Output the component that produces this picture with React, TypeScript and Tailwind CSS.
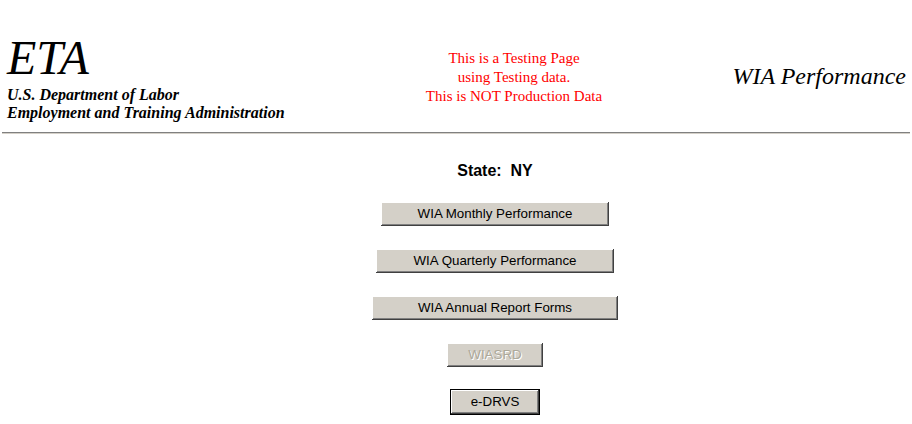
import React from 'react';

const bevel =
  'shadow-[inset_-1px_-1px_#404040,inset_1px_1px_#ffffff,inset_-2px_-2px_#808080,inset_2px_2px_#d4d0c8]';

function ClassicButton({
  label,
  width,
  disabled,
  isDefault,
}: {
  label: string;
  width: string;
  disabled?: boolean;
  isDefault?: boolean;
}) {
  return (
    <button
      type="button"
      disabled={disabled}
      className={`${width} h-[24px] bg-[#d4d0c8] ${bevel} font-['Liberation_Sans',Arial,sans-serif] text-[13.33px] leading-none ${
        disabled ? 'text-[#aca899] [text-shadow:1px_1px_0_#ffffff]' : 'text-black'
      } ${isDefault ? 'outline outline-1 outline-black' : ''}`}
    >
      {label}
    </button>
  );
}

export default function App() {
  return (
    <div className="w-[912px] h-[424px] bg-white overflow-hidden">
      {/* Header */}
      <div className="flex items-start h-[132px] font-['Liberation_Serif','Times_New_Roman',serif]">
        <div className="w-[303px] pt-[34px] pl-[7px]">
          <div className="text-[48px] leading-[48px] italic text-black">ETA</div>
          <div className="mt-[4px] text-[16px] leading-[18px] font-bold italic text-black">
            <div>U.S. Department of Labor</div>
            <div>Employment and Training Administration</div>
          </div>
        </div>
        <div className="flex-1 pt-[49px] text-center text-[15px] leading-[19px] text-[#ff0000]">
          <div>This is a Testing Page</div>
          <div>using Testing data.</div>
          <div>This is NOT Production Data</div>
        </div>
        <div className="w-[187px] pt-[58px] pr-[6px] text-right text-[24px] italic text-black">
          WIA Performance
        </div>
      </div>

      {/* Rule */}
      <div className="mx-[2px] border-t border-t-[#808080] border-b border-b-[#d4d0c8]" />

      {/* Menu */}
      <div className="pl-[78px] flex flex-col items-center">
        <div className="mt-[25px] font-['Liberation_Sans',Arial,sans-serif] text-[16px] font-bold text-black whitespace-pre">
          State:  NY
        </div>
        <div className="mt-[19px] flex flex-col items-center gap-[23px]">
          <ClassicButton label="WIA Monthly Performance" width="w-[228px]" />
          <ClassicButton label="WIA Quarterly Performance" width="w-[238px]" />
          <ClassicButton label="WIA Annual Report Forms" width="w-[246px]" />
          <ClassicButton label="WIASRD" width="w-[96px]" disabled />
          <ClassicButton label="e-DRVS" width="w-[88px]" isDefault />
        </div>
      </div>
    </div>
  );
}
